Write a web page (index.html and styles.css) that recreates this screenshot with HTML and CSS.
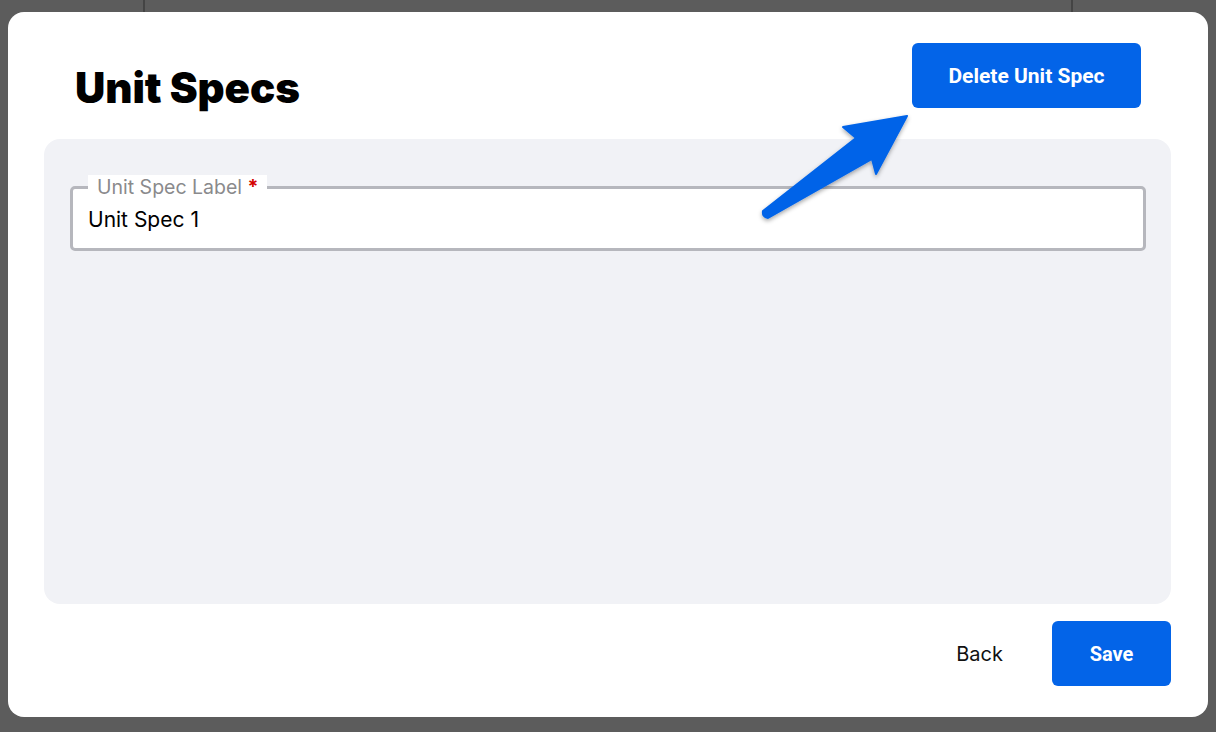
FILE: index.html
```html
<!DOCTYPE html>
<html>
<head>
<meta charset="utf-8">
<link rel="stylesheet" href="styles.css">
</head>
<body>
<div class="backdrop">
  <div class="bg-line bg-line-left"></div>
  <div class="bg-line bg-line-right"></div>
  <div class="modal">
    <div class="modal-header">
      <h1 class="title">Unit Specs</h1>
      <button class="btn btn-primary btn-delete">Delete Unit Spec</button>
    </div>
    <div class="panel">
      <div class="field">
        <label class="field-label">Unit Spec Label <span class="req">*</span></label>
        <div class="field-input">Unit Spec 1</div>
      </div>
    </div>
    <div class="modal-footer">
      <button class="btn btn-text">Back</button>
      <button class="btn btn-primary btn-save">Save</button>
    </div>
    <svg class="arrow" width="1216" height="732" viewBox="0 0 1216 732">
      <defs>
        <filter id="sh" x="-20%" y="-20%" width="140%" height="140%">
          <feDropShadow dx="0" dy="2" stdDeviation="2" flood-color="#000" flood-opacity="0.35"/>
        </filter>
      </defs>
      <path filter="url(#sh)" fill="#0364e8" stroke="#0364e8" stroke-width="2" stroke-linejoin="round"
        d="M907 116 L843 127 L856 138 L763 211 Q762 217 768 218 L872 159 L876 174 Z"/>
    </svg>
  </div>
</div>
</body>
</html>
```
FILE: styles.css
```css
* { box-sizing: border-box; }
html, body { margin: 0; padding: 0; }
body {
  background: #5c5c5c;
  font-family: Inter, Roboto, "Liberation Sans", sans-serif;
  width: 1216px;
  height: 732px;
  overflow: hidden;
}
.backdrop {
  position: relative;
  width: 1216px;
  height: 732px;
  padding: 12px 8px 15px 8px;
}
.bg-line {
  position: absolute;
  top: 0;
  width: 2px;
  height: 12px;
  background: #444;
}
.bg-line-left { left: 143px; }
.bg-line-right { left: 1071px; }
.modal {
  position: relative;
  background: #fff;
  border-radius: 16px;
  width: 1200px;
  height: 705px;
  padding: 31px 37px 31px 36px;
  display: flex;
  flex-direction: column;
}
.modal-header {
  display: flex;
  justify-content: space-between;
  align-items: flex-start;
  padding: 0 30px 0 31px;
  height: 65px;
}
.title {
  margin: 21px 0 0 0;
  font-family: Inter, sans-serif;
  font-weight: 900;
  font-size: 42px;
  line-height: 48px;
  color: #000;
  letter-spacing: -0.1px;
}
.btn {
  border: none;
  background: none;
  font-family: Roboto, Inter, sans-serif;
  font-size: 20px;
  cursor: pointer;
  height: 65px;
  border-radius: 6px;
  padding: 0;
}
.btn-primary {
  background: #0364e8;
  color: #fff;
  font-weight: 700;
}
.btn-delete { width: 229px; font-size: 21px; }
.btn-save { width: 119px; }
.btn-text {
  color: #111;
  font-family: Inter, sans-serif;
  font-weight: 400;
  padding: 0 24px;
}
.panel {
  margin-top: 31px;
  background: #f1f2f6;
  border-radius: 16px;
  height: 465px;
  padding: 36px 25px 0 26px;
}
.field {
  position: relative;
  padding-top: 11px;
}
.field-label {
  position: absolute;
  left: 18px;
  top: 0;
  padding: 0 9px;
  background: #fff;
  color: #8a8a8c;
  font-family: Inter, sans-serif;
  font-size: 19.5px;
  line-height: 24px;
  height: 19px;
}
.req { color: #d40000; font-weight: 700; }
.field-input {
  height: 65px;
  border: 3px solid #b6b7bd;
  border-radius: 5px;
  background: #fff;
  padding: 0 15px;
  display: flex;
  align-items: center;
  padding-top: 1px;
  font-family: Inter, sans-serif;
  font-size: 21px;
  color: #000;
}
.modal-footer {
  margin-top: 17px;
  display: flex;
  justify-content: flex-end;
  gap: 25px;
}
.arrow {
  position: absolute;
  left: -8px;
  top: -12px;
  pointer-events: none;
}
```
